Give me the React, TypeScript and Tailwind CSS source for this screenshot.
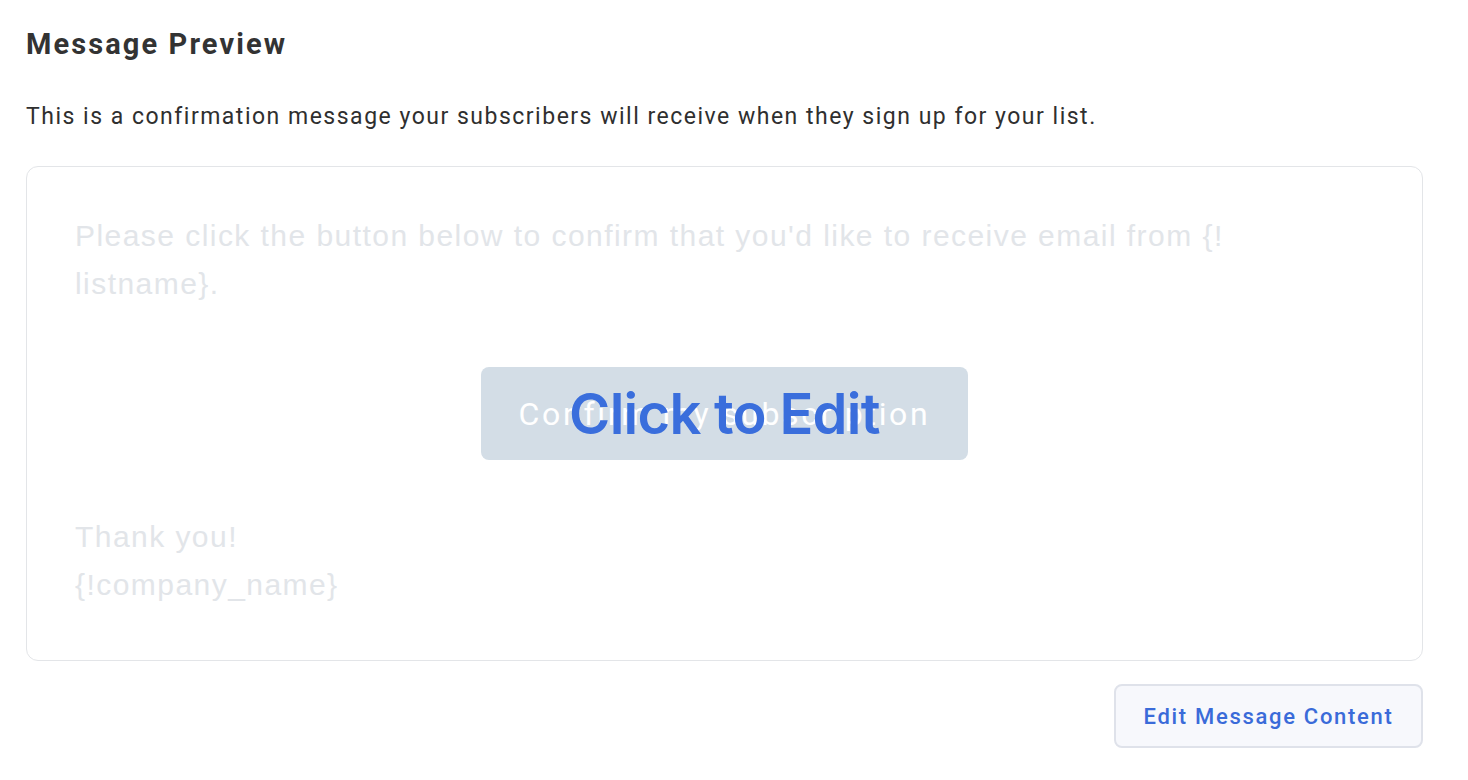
import React from "react";

const App: React.FC = () => {
  return (
    <div className="min-h-screen bg-white px-[26px] pt-[25px] font-['Roboto',sans-serif] text-[#333333]">
      <h2 className="text-[29px] font-bold leading-[38px] tracking-[2.1px]">Message Preview</h2>
      <p className="mt-[39px] text-[23px] leading-[30px] tracking-[1.5px] text-[#2f2f2f]">
        This is a confirmation message your subscribers will receive when they sign up for your list.
      </p>

      {/* Preview card */}
      <div className="relative mt-[34px] w-[1397px] rounded-[12px] border border-[#e3e5e8] px-[48px] pt-[45px] pb-[51px] font-['Liberation_Sans',Arial,sans-serif] text-[30px] leading-[48px] tracking-[1.45px] text-[#e2e5e9]">
        <p className="pr-[40px]">
          Please click the button below to confirm that you'd like to receive email from {"{!"}
          <wbr />
          listname{"}"}.
        </p>
        <div className="mt-[59px] flex justify-center">
          <div className="flex h-[93px] w-[487px] items-center justify-center rounded-[8px] bg-[#d3dde6] font-['Roboto',sans-serif] text-[32px] tracking-[2.7px] text-white">
            Confirm my subscription
          </div>
        </div>
        <p className="mt-[53px]">
          Thank you!
          <br />
          {"{!company_name}"}
        </p>

        {/* Overlay */}
        <div className="absolute inset-0 flex items-center justify-center">
          <span className="font-['Inter',sans-serif] text-[56px] font-semibold tracking-[-0.7px] text-[#3a6edc]">
            Click to Edit
          </span>
        </div>
      </div>

      <div className="mt-[23px] flex w-[1397px] justify-end">
        <button className="h-[64px] w-[309px] rounded-[8px] border-2 border-[#dfe2ea] bg-[#f7f8fc] text-[22px] font-medium tracking-[1.7px] text-[#3a6bd9]">
          Edit Message Content
        </button>
      </div>
    </div>
  );
};

export default App;
